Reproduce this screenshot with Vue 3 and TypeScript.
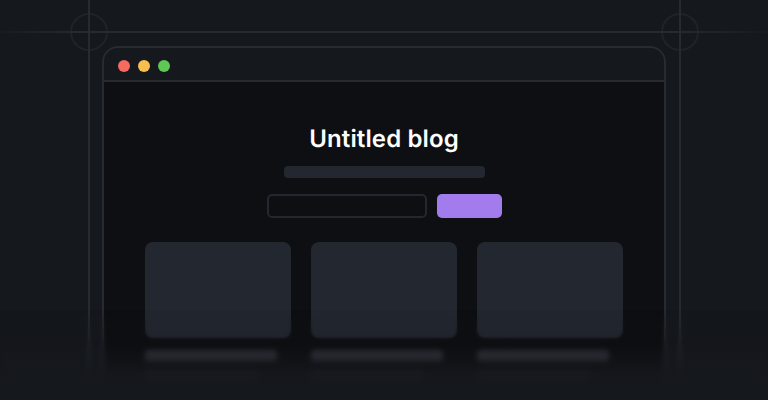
<script setup lang="ts">
const cards = [0, 1, 2]
const dots = ['red', 'yellow', 'green']
</script>

<template>
  <div class="stage">
    <svg class="guides" width="768" height="400" viewBox="0 0 768 400" fill="none">
      <defs>
        <linearGradient id="hfade" x1="0" y1="0" x2="768" y2="0" gradientUnits="userSpaceOnUse">
          <stop offset="0" stop-color="#272a31" stop-opacity="0.1" />
          <stop offset="0.1" stop-color="#272a31" />
          <stop offset="0.88" stop-color="#272a31" />
          <stop offset="1" stop-color="#272a31" stop-opacity="0.1" />
        </linearGradient>
      </defs>
      <circle cx="89" cy="32" r="18" stroke="#20232a" stroke-width="2" />
      <circle cx="680" cy="32" r="18" stroke="#20232a" stroke-width="2" />
      <rect x="0" y="31" width="768" height="2" fill="url(#hfade)" />
      <rect x="88" y="0" width="2" height="400" fill="#272a31" />
      <rect x="679" y="0" width="2" height="400" fill="#272a31" />
    </svg>

    <section class="window">
      <header class="titlebar">
        <span v-for="d in dots" :key="d" class="dot" :class="d"></span>
      </header>
      <main class="body">
        <h1 class="title">Untitled blog</h1>
        <div class="subtitle"></div>
        <div class="form">
          <div class="input"></div>
          <div class="button"></div>
        </div>
        <div class="cards">
          <article v-for="c in cards" :key="c" class="card">
            <div class="thumb"></div>
            <div class="line"></div>
            <div class="line short"></div>
          </article>
        </div>
      </main>
    </section>

    <div class="blur"></div>
    <div class="blur heavy"></div>
    <div class="fade"></div>
  </div>
</template>

<style>
html, body { margin: 0; background: #15181d; }
</style>

<style scoped>
.stage {
  position: relative;
  width: 768px;
  height: 400px;
  overflow: hidden;
  background: #15181d;
  padding-top: 46px;
  box-sizing: border-box;
  font-family: Inter, "Liberation Sans", sans-serif;
}
.guides { position: absolute; left: 0; top: 0; }
.window {
  position: relative;
  width: 564px;
  height: 400px;
  margin-left: 102px;
  box-sizing: border-box;
  border: 2px solid #272a31;
  border-radius: 16px 16px 0 0;
  background: #15181d;
  overflow: hidden;
}
.titlebar {
  display: flex;
  align-items: center;
  gap: 8px;
  height: 28px;
  padding: 4px 0 0 14px;
  border-bottom: 2px solid #272a31;
  box-sizing: content-box;
}
.dot { width: 12px; height: 12px; border-radius: 50%; }
.red { background: #f56b5f; }
.yellow { background: #f7bf4f; }
.green { background: #5fc754; }
.body {
  height: 100%;
  background: #0d0f12;
  display: flex;
  flex-direction: column;
  align-items: center;
  padding-top: 42px;
  box-sizing: border-box;
}
.title {
  margin: 0;
  font-size: 24px;
  line-height: 30px;
  font-weight: 600;
  color: #ffffff;
  letter-spacing: 0.12px;
  text-rendering: geometricPrecision;
}
.subtitle {
  width: 201px;
  height: 12px;
  margin: 12px 0 0 1px;
  border-radius: 4px;
  background: #23272f;
}
.form { display: flex; gap: 10px; margin-top: 16px; }
.input {
  width: 160px;
  height: 24px;
  box-sizing: border-box;
  border: 2px solid #23272f;
  border-radius: 5px;
  background: #0d0f12;
}
.button {
  width: 65px;
  height: 24px;
  border-radius: 5px;
  background: #a27cec;
}
.cards { display: flex; gap: 20px; margin-top: 24px; }
.card { width: 146px; }
.thumb { height: 96px; border-radius: 8px; background: #23272f; }
.line {
  width: 132px;
  height: 12px;
  margin-top: 12px;
  border-radius: 4px;
  background: #2b2e34;
}
.line.short { width: 112px; margin-top: 10px; }
.blur {
  position: absolute;
  left: 0;
  right: 0;
  bottom: 0;
  height: 90px;
  backdrop-filter: blur(1.5px);
  -webkit-mask-image: linear-gradient(to bottom, transparent 0, #000 40%);
  mask-image: linear-gradient(to bottom, transparent 0, #000 40%);
}
.blur.heavy {
  height: 62px;
  backdrop-filter: blur(2px);
  -webkit-mask-image: linear-gradient(to bottom, transparent 0, #000 25%);
  mask-image: linear-gradient(to bottom, transparent 0, #000 25%);
}
.fade {
  position: absolute;
  left: 0;
  right: 0;
  bottom: 0;
  height: 90px;
  background: linear-gradient(to bottom, rgba(21, 24, 29, 0) 0%, rgba(21, 24, 29, 0.1) 30%, rgba(21, 24, 29, 0.25) 50%, rgba(21, 24, 29, 0.92) 72%, #15181d 90%);
}
</style>
